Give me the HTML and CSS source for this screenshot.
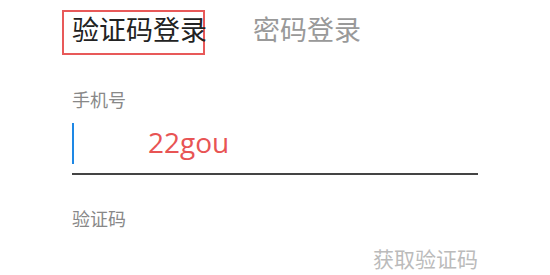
FILE: index.html
```html
<!DOCTYPE html>
<html lang="zh-CN">
<head>
<meta charset="utf-8">
<link rel="stylesheet" href="styles.css">
</head>
<body>
<div class="page">
  <div class="tabs">
    <div class="tab tab-active">验证码登录</div>
    <div class="tab">密码登录</div>
  </div>
  <div class="field">
    <div class="label">手机号</div>
    <div class="input-row">
      <span class="caret"></span>
      <span class="value">22gou</span>
    </div>
  </div>
  <div class="field field-code">
    <div class="label">验证码</div>
    <div class="code-row">
      <span class="get-code">获取验证码</span>
    </div>
  </div>
</div>
</body>
</html>
```
FILE: styles.css
```css
* { box-sizing: border-box; }
html, body { margin: 0; padding: 0; background: #fff; }
body {
  font-family: "Noto Sans CJK SC", "Noto Sans", sans-serif;
  width: 550px;
  height: 275px;
  overflow: hidden;
}
.page {
  padding: 10px 72px 0 72px;
}
.tabs {
  display: flex;
  align-items: flex-start;
  margin-left: -10px;
  height: 45px;
}
.tab {
  font-size: 27px;
  line-height: 27px;
  white-space: nowrap;
  color: #999;
  padding-top: 5px;
}
.tab-active {
  color: #222;
  border: 2px solid rgba(228, 60, 60, 0.85);
  height: 45px;
  width: 143px;
  padding: 3px 0 0 8px;
  margin-right: 48px;
}
.field {
  margin-top: 33px;
}
.label {
  font-size: 18px;
  line-height: 22px;
  color: #888;
}
.input-row {
  display: flex;
  align-items: center;
  padding: 13px 0 9px 0;
  border-bottom: 2px solid #444;
}
.caret {
  width: 2px;
  height: 41px;
  background: #1e88e5;
}
.value {
  margin-left: 74px;
  margin-top: -4px;
  font-family: "Open Sans", "Noto Sans", sans-serif;
  font-size: 28px;
  color: #e85454;
  line-height: 30px;
}
.field-code {
  margin-top: 32px;
}
.code-row {
  display: flex;
  justify-content: flex-end;
  padding-top: 17px;
}
.get-code {
  font-size: 21px;
  line-height: 24px;
  color: #bbb;
}
```
